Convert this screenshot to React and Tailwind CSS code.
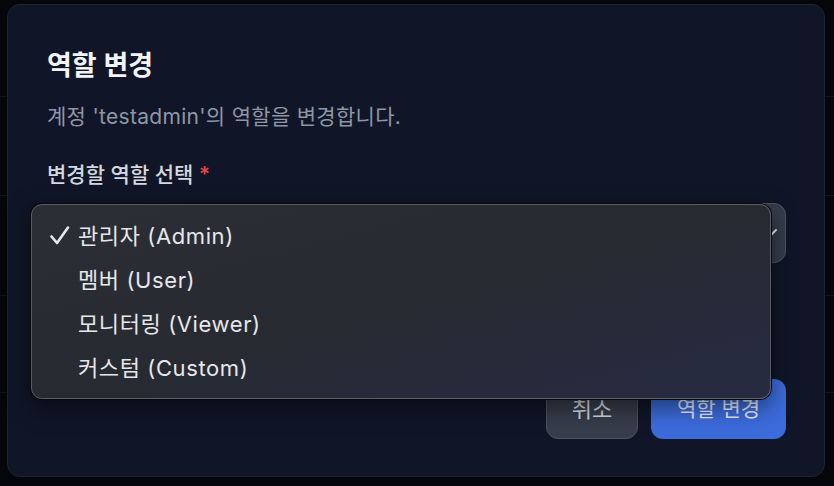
import React from "react";

const font = { fontFamily: 'Inter, "Noto Sans CJK KR", "Noto Sans", sans-serif' };

function Check() {
  return (
    <svg width="20" height="20" viewBox="0 0 20 20" fill="none" className="shrink-0">
      <polyline points="1.5,10.5 7,17 18,1.5" stroke="#e5e7eb" strokeWidth="2.6" strokeLinecap="round" strokeLinejoin="round" />
    </svg>
  );
}

export default function App() {
  const options = ["관리자 (Admin)", "멤버 (User)", "모니터링 (Viewer)", "커스텀 (Custom)"];
  return (
    <div className="relative w-[834px] h-[486px] overflow-hidden bg-[#04060a]" style={font}>
      {/* background table rows behind the overlay */}
      <div className="flex flex-col">
        <div className="h-[97px] border-b border-[#11151b]" />
        <div className="h-[99px] border-b border-[#11151b]" />
        <div className="h-[100px] border-b border-[#11151b]" />
        <div className="h-[97px] border-b border-[#11151b]" />
      </div>

      {/* modal */}
      <div className="absolute left-[7px] top-[4px] w-[818px] h-[473px] rounded-[13px] border border-[#1c2333] bg-[#101627] pl-[39px] pr-[38px] pt-[44px]">
        <div className="flex flex-col">
          <h2 className="text-[27px] leading-[34px] font-semibold text-[#f3f4f6]">역할 변경</h2>
          <p className="mt-[20px] text-[21px] leading-[28px] tracking-[0.3px] text-[#8f97a6]">계정 'testadmin'의 역할을 변경합니다.</p>
          <label className="mt-[30px] text-[21px] leading-[28px] font-medium text-[#d5d8de]">
            변경할 역할 선택 <span className="text-[#ef4444]">*</span>
          </label>

          <div className="relative mt-[14px] h-[60px] rounded-[12px] border border-[#4b5563] bg-[#353c4a] flex items-center justify-between pl-[16px] pr-[7px]">
            <span className="text-[20px] text-[#e5e7eb]">관리자 (Admin)</span>
            <svg width="16" height="16" viewBox="0 0 16 16" fill="none">
              <polyline points="2,5 8,11 14,5" stroke="#e5e7eb" strokeWidth="2" strokeLinecap="round" strokeLinejoin="round" />
            </svg>

            {/* native dropdown popup */}
            <div className="absolute left-[-17px] top-[0px] w-[740px] h-[195px] rounded-[11px] border border-[#5a5d66] bg-linear-to-br from-[#2c2e35] via-[#272a31] to-[#262b43] shadow-[0_0_0_1px_#07090d,0_8px_24px_rgba(0,0,0,0.5)] py-[9px]">
              {options.map((o, i) => (
                <div key={o} className="h-[44px] flex items-center pl-[18px]">
                  <div className="w-[28px]">{i === 0 ? <Check /> : null}</div>
                  <span className="text-[22px] tracking-[0.6px] text-[#e6e7ea]">{o}</span>
                </div>
              ))}
            </div>
          </div>

          <div className="mt-[116px] flex justify-end gap-[13px]">
            <button className="h-[60px] w-[92px] rounded-[12px] border border-[#4b5563] bg-[#363d4b] text-[22px] text-[#d5d8de]">취소</button>
            <button className="h-[60px] w-[135px] rounded-[12px] bg-[#3c6bdb] text-[21px] text-[#e8eefc]">역할 변경</button>
          </div>
        </div>
      </div>
    </div>
  );
}
